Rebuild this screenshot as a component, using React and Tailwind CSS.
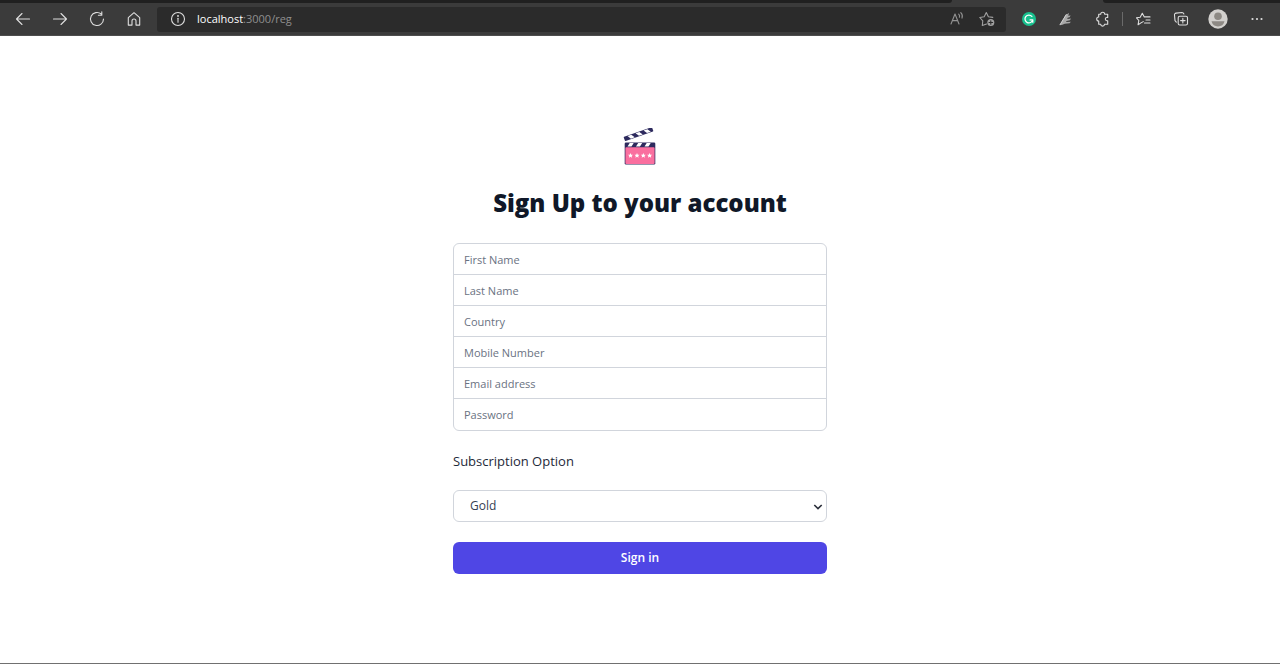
import React from "react";

function Icon({ children, className = "h-4 w-4", viewBox = "0 0 16 16", label }) {
  return (
    <svg
      viewBox={viewBox}
      className={className}
      fill="none"
      stroke="currentColor"
      strokeWidth="1.1"
      strokeLinecap="round"
      strokeLinejoin="round"
      role={label ? "img" : undefined}
      aria-label={label}
      aria-hidden={label ? undefined : true}
    >
      {children}
    </svg>
  );
}

function ToolButton({ label, wide = false, children }) {
  return (
    <button
      type="button"
      aria-label={label}
      className={
        wide
          ? "flex h-full w-[42px] shrink-0 items-center justify-center"
          : "flex h-full w-[37px] shrink-0 items-center justify-center"
      }
    >
      {children}
    </button>
  );
}

function BrowserBar() {
  return (
    <header className="h-9 shrink-0 border-b border-[#4d4d4d] bg-[#3b3b3b] text-[#dedede]">
      <div className="flex h-[3px]">
        <div className="w-[74.4%] rounded-br-sm bg-[#202020]" />
        <div className="w-[11.8%]" />
        <div className="flex-1 rounded-bl-sm bg-[#202020]" />
      </div>
      <div className="flex h-8 items-center pr-[2px] pl-1">
        <ToolButton label="Back">
          <Icon>
            <path d="M14.5 8H1.5M7 2.5 1.5 8 7 13.5" />
          </Icon>
        </ToolButton>
        <ToolButton label="Forward">
          <Icon>
            <path d="M1.5 8h13M9 2.5 14.5 8 9 13.5" />
          </Icon>
        </ToolButton>
        <ToolButton label="Refresh">
          <Icon>
            <path d="M14.5 8a6.5 6.5 0 1 1-2.3-5M12.8.8v3.4H9.4" />
          </Icon>
        </ToolButton>
        <ToolButton label="Home">
          <Icon>
            <path d="M2.3 6.7 8 1.7l5.7 5v7.4H10V10a2 2 0 0 0-4 0v4.1H2.3z" />
          </Icon>
        </ToolButton>
        <div className="mr-1 ml-[5px] flex h-[25px] flex-1 items-center rounded-[3px] bg-[#2b2b2b] pr-1 pl-[13px]">
          <Icon label="Site information">
            <circle cx="8" cy="8" r="6.5" />
            <path d="M8 7.3v4" />
            <circle cx="8" cy="4.9" r=".4" fill="currentColor" />
          </Icon>
          <p className="ml-[11px] flex-1 text-[11px] leading-4">
            <span className="text-white">localhost</span>
            <span className="text-[#8f8f8f]">:3000/reg</span>
          </p>
          <button type="button" aria-label="Read aloud" className="flex w-[30px] justify-center text-[#929292]">
            <Icon>
              <path d="M2 13 6 3l4 10M3.4 9.6h5.2M9.7 3.1c.9.8 1.1 2 .7 3.2M11.8 1.6c1.5 1.4 1.9 3.5 1.2 5.5" />
            </Icon>
          </button>
          <button type="button" aria-label="Add to favorites" className="flex w-[30px] justify-center text-[#a0a0a0]">
            <Icon>
              <path d="M7.5 13 3.3 14.5l.5-4.7L.8 6.5l4.4-.8L7.3 1.5l2.1 4.2 4.4.7" />
              <circle cx="11.8" cy="11.5" r="3.5" fill="currentColor" stroke="none" />
              <path d="M11.8 9.7v3.6M10 11.5h3.6" stroke="#2b2b2b" />
            </Icon>
          </button>
        </div>
        <ToolButton label="Grammarly">
          <Icon className="h-[14px] w-[14px]">
            <circle cx="8" cy="8" r="8" fill="#17bf8d" stroke="none" />
            <path d="M11.3 5A4.5 4.5 0 1 0 12.3 9H9.2M12.3 9v2.6" stroke="#fff" strokeWidth="1.5" />
          </Icon>
        </ToolButton>
        <ToolButton label="Web Editor extension">
          <Icon className="h-[14px] w-[14px]">
            <path
              d="M.8 15 7.400 3.300 11.500 1.200 10.500 4.300l2.800-.4-1.200 2.200-2.200.6-.5 1.300 4.300-.6-1.200 2-3.800.8-.7 1.200 5.600-.3-1.500 1.700-5.600.7-2.600 1.200z"
              fill="#a8a8a8"
              stroke="none"
            />
            <path d="M1.200 14.500 8.300 3" stroke="#d3d3d3" />
          </Icon>
        </ToolButton>
        <ToolButton label="Extensions">
          <Icon>
            <path d="M3.700 3.300h2a2 2 0 0 1 4 0h3v3.200h-.8a1.600 1.600 0 0 0 0 3.200h.8v3.500H9.500a1.900 1.900 0 0 1-3.800 0h-2V10a2 2 0 0 1 0-4z" />
          </Icon>
        </ToolButton>
        <div className="mr-[2px] ml-px h-[14px] w-px bg-[#6a6a6a]" />
        <ToolButton label="Favorites">
          <Icon>
            <path d="m5 11.900-2.900 1.800.7-4.200-2.300-2.700 3.700-.6L6.300 2.200l2 3.700H14M10 9h4M8.500 12H14M5 11.900l2.200-1.300" />
          </Icon>
        </ToolButton>
        <ToolButton label="Collections">
          <Icon>
            <rect x="5.200" y="5.200" width="9.300" height="8.800" rx="1.600" />
            <path d="M9.850 7.400v4.500M7.600 9.600h4.500M3.300 11.200 2 9.700 1.500 4a1.700 1.700 0 0 1 1.500-1.900l6-.6c1 0 1.500.5 1.900 1.500" />
          </Icon>
        </ToolButton>
        <ToolButton label="Profile">
          <Icon className="h-5 w-5" viewBox="0 0 20 20">
            <circle cx="10" cy="10" r="9.700" fill="#d2d0cd" stroke="none" />
            <circle cx="10" cy="7.300" r="3.800" fill="#8d8984" stroke="none" />
            <path d="M3.500 12.300h13c-.7 3.400-3.400 5.200-6.500 5.200s-5.800-1.800-6.500-5.200z" fill="#8d8984" stroke="none" />
          </Icon>
        </ToolButton>
        <ToolButton label="Settings and more" wide>
          <Icon>
            <g fill="currentColor" stroke="none">
              <circle cx="3.500" cy="8" r="1.100" />
              <circle cx="8" cy="8" r="1.100" />
              <circle cx="12.500" cy="8" r="1.100" />
            </g>
          </Icon>
        </ToolButton>
      </div>
    </header>
  );
}

function ClapperLogo() {
  return (
    <svg viewBox="0 0 34 38" className="mx-auto h-[38px] w-[34px]" role="img" aria-label="Clapperboard">
      <g transform="rotate(-19 2 13)">
        <rect x="2" y="8.600" width="30" height="4.600" rx=".6" fill="#2d2a5e" />
        <path d="M6 9.100h4l2.400 3.600h-4zM14.500 9.100h4l2.400 3.600h-4zM23 9.100h4l2.400 3.600h-4z" fill="#fff" />
      </g>
      <rect x="1.700" y="14.500" width="30.600" height="22" rx="1.300" fill="#2d2a5e" />
      <path d="M4.500 18.600 6.700 15h4l-2.200 3.600zM13 18.600l2.200-3.600h4L17 18.600zM21.500 18.600l2.200-3.600h4l-2.200 3.600z" fill="#fff" />
      <rect x="2.400" y="19.200" width="29.200" height="16.700" rx=".9" fill="#fa6f9f" />
      <g fill="#fff">
        {[7.5, 14, 20.3, 26.6].map((x) => (
          <path
            key={x}
            transform={`translate(${x} 27.5)`}
            d="M0-2.500.75-.8 2.500-.7 1.200.5 1.600 2.200 0 1.300-1.600 2.200-1.200.5-2.500-.7-.75-.8z"
          />
        ))}
      </g>
    </svg>
  );
}

const fields = [
  { id: "first-name", label: "First Name", type: "text" },
  { id: "last-name", label: "Last Name", type: "text" },
  { id: "country", label: "Country", type: "text" },
  { id: "mobile", label: "Mobile Number", type: "tel" },
  { id: "email", label: "Email address", type: "email" },
  { id: "password", label: "Password", type: "password" },
];

export default function App() {
  return (
    <div className="flex min-h-screen flex-col bg-white font-['Segoe_UI','Open_Sans','Noto_Sans',sans-serif]">
      <BrowserBar />
      <main className="flex flex-1 items-center justify-center px-4 pt-[26px] pb-6">
        <div className="w-full max-w-[374px]">
          <ClapperLogo />
          <h1 className="mt-[21px] text-center text-2xl leading-8 font-extrabold text-gray-900">
            Sign Up to your account
          </h1>
          <form className="mt-6" onSubmit={(e) => e.preventDefault()}>
            <div className="divide-y divide-gray-300 rounded-md border border-gray-300">
              {fields.map((f) => (
                <input
                  key={f.id}
                  id={f.id}
                  type={f.type}
                  aria-label={f.label}
                  placeholder={f.label}
                  className="block h-[31px] w-full px-[10px] pt-px text-[11px] text-gray-900 placeholder:text-gray-500"
                />
              ))}
            </div>
            <label htmlFor="plan" className="mt-5 block text-[13px] leading-5 text-gray-800">
              Subscription Option
            </label>
            <div className="relative mt-[19px]">
              <select
                id="plan"
                defaultValue="Gold"
                className="block h-8 w-full appearance-none rounded-md border border-gray-300 bg-white px-4 pt-px text-xs font-medium text-gray-700"
              >
                <option>Gold</option>
                <option>Silver</option>
                <option>Platinum</option>
              </select>
              <svg
                viewBox="0 0 10 10"
                className="pointer-events-none absolute top-3 right-1 h-[10px] w-[10px]"
                fill="none"
                stroke="#2b2f3a"
                strokeWidth="1.600"
                aria-hidden="true"
              >
                <path d="M1.300 3 5 6.600 8.700 3" />
              </svg>
            </div>
            <button
              type="submit"
              className="mt-5 flex h-8 w-full items-center justify-center rounded-md bg-[#4f46e5] pt-px text-xs font-semibold text-white"
            >
              Sign in
            </button>
          </form>
        </div>
      </main>
      <div className="h-px shrink-0 bg-[#707070]" />
    </div>
  );
}
